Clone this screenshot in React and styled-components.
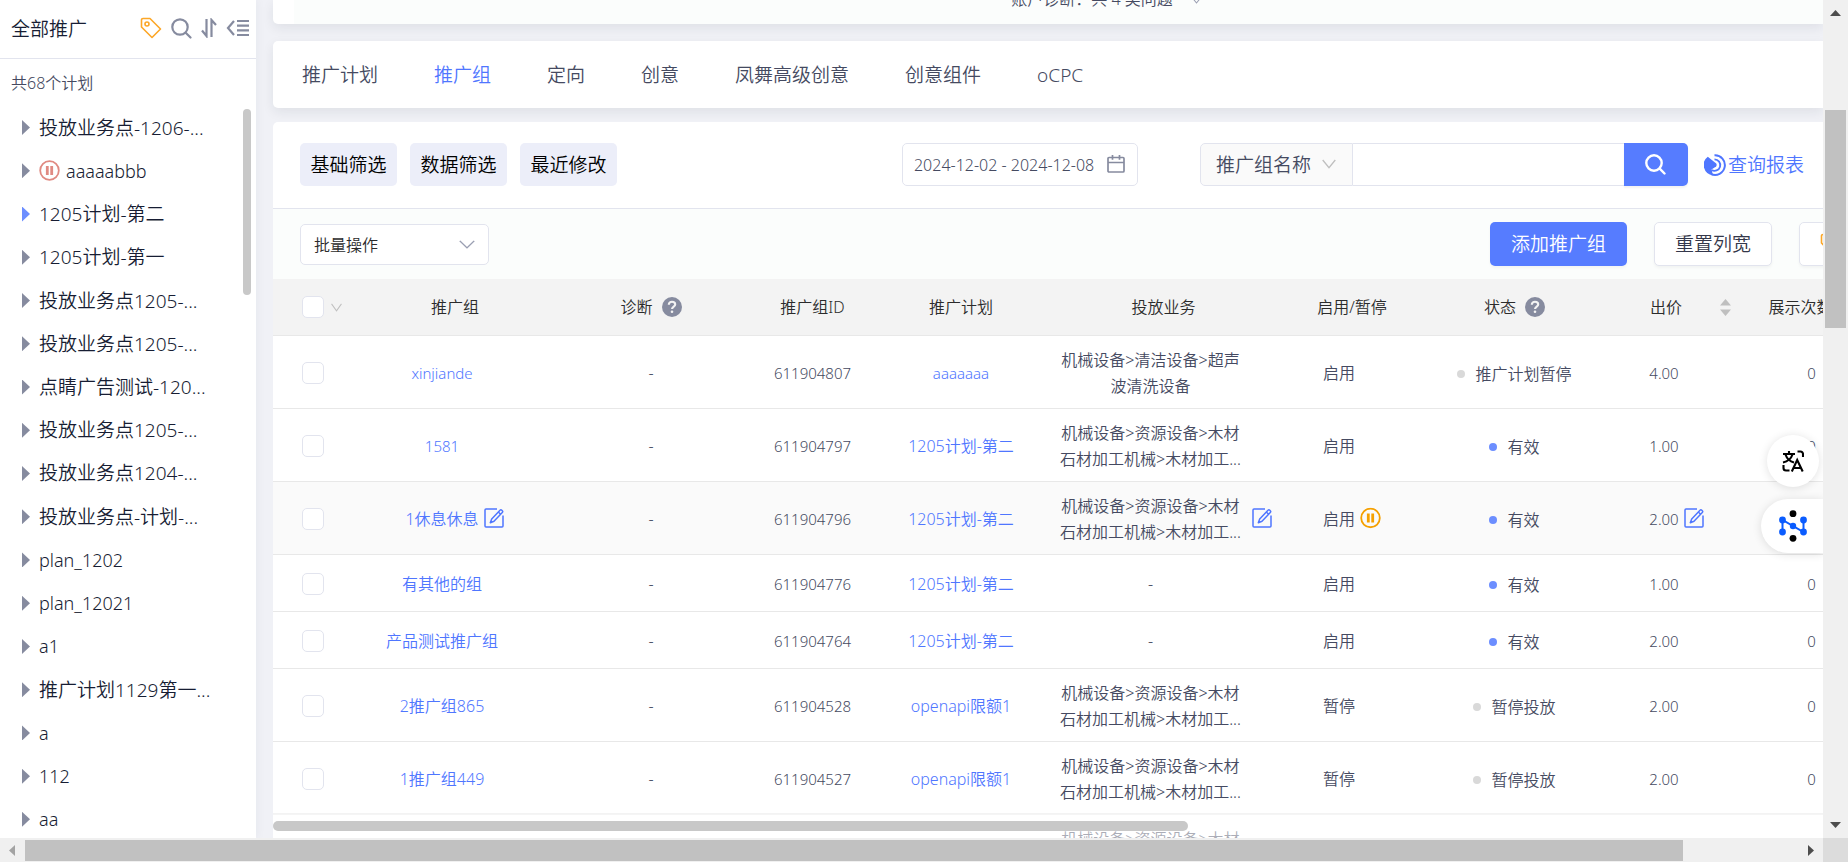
import React from "react";
import styled, { createGlobalStyle, css } from "styled-components";

const c = {
  blue: "#4f76ff",
  fill: "#567cff",
  dot: "#6c8eff",
  text: "#454a61",
  dark: "#171d33",
  icon: "#868b9f",
  line: "#e2e4ee",
  rowLine: "#e8e8e8",
  thumb: "#c8c8c8",
  orange: "#fca728",
};

const GlobalStyle = createGlobalStyle`
  *, *::before, *::after { box-sizing: border-box; }
  body {
    margin: 0;
    overflow: hidden;
    background: #f0f1f6;
    color: ${c.text};
    font: 350 16px/26px "Noto Sans", "Noto Sans CJK SC", sans-serif;
  }
  button, input, select { font: inherit; color: inherit; }
  button { cursor: pointer; }
  svg { display: block; flex: none; }
`;

/* ---------- window frame ---------- */

const Window = styled.div`
  display: grid;
  grid-template-columns: minmax(0, 1fr) 25px;
  grid-template-rows: minmax(0, 1fr) 24px;
  height: 100vh;
`;

const Page = styled.div`
  display: flex;
  gap: 17px;
  min-width: 0;
  overflow: hidden;
`;

const VTrack = styled.div`
  display: flex;
  flex-direction: column;
  align-items: center;
  justify-content: space-between;
  padding: 10px 2px;
  background: #f0f0f0;
`;

const VRail = styled.div`
  flex: 1;
  width: 100%;
  padding: 94px 0 9px;
`;

const VThumb = styled.div`
  height: 31%;
  background: #c1c1c1;
`;

const HTrack = styled.div`
  display: flex;
  align-items: center;
  padding: 2px 9px 1px;
  background: #f0f0f0;
`;

const HRail = styled.div`
  flex: 1;
  height: 100%;
  padding: 0 0 0 10px;
`;

const HThumb = styled.div`
  width: 93%;
  height: 100%;
  background: #c1c1c1;
`;

const Corner = styled.div`
  background: #dcdcdc;
`;

/* ---------- sidebar ---------- */

const Sidebar = styled.aside`
  position: relative;
  display: flex;
  flex: none;
  flex-direction: column;
  width: 256px;
  background: #fff;
  overflow: hidden;
  box-shadow: 0 0 10px rgba(40, 50, 90, 0.06);
`;

const SideHead = styled.header`
  display: flex;
  flex: none;
  align-items: center;
  justify-content: space-between;
  height: 59px;
  padding: 0 6px 2px 11px;
  border-bottom: 1px solid ${c.line};
`;

const SideTitle = styled.h1`
  margin: 0;
  padding-top: 2px;
  color: ${c.dark};
  font-size: 19px;
  font-weight: inherit;
`;

const SideTools = styled.div`
  display: flex;
  align-items: center;
  gap: 9px;
`;

const IconButton = styled.button`
  display: inline-flex;
  align-items: center;
  padding: 0;
  border: 0;
  background: none;
`;

const PlanCount = styled.p`
  flex: none;
  margin: 0;
  padding: 11px 11px 10px;
  line-height: 26px;
`;

const PlanList = styled.ul`
  display: flex;
  flex: 1;
  flex-direction: column;
  min-height: 0;
  margin: 0 0 -3px;
  padding: 0 24px 0 22px;
  list-style: none;
`;

const PlanItem = styled.li`
  display: flex;
  flex: 1;
  align-items: center;
  gap: 9px;
`;

const PlanArrow = styled.button`
  width: 8px;
  height: 15px;
  padding: 0;
  border: 0;
  background: ${(p) => (p.$active ? c.dot : c.icon)};
  clip-path: polygon(0 0, 100% 50%, 0 100%);
`;

const PlanLink = styled.a`
  display: flex;
  align-items: center;
  gap: 6px;
  color: ${c.dark};
  font-size: ${(p) => (p.$latin ? 18 : 19)}px;
  white-space: nowrap;
  text-decoration: none;
`;

const SideThumb = styled.div`
  position: absolute;
  top: 109px;
  right: 5px;
  width: 8px;
  height: 186px;
  border-radius: 4px;
  background: ${c.thumb};
`;

/* ---------- main column ---------- */

const Main = styled.main`
  position: relative;
  display: flex;
  flex: 1;
  flex-direction: column;
  min-width: 0;
`;

const cardShadow = css`
  box-shadow: 0 4px 12px rgba(30, 35, 50, 0.08);
`;

const DiagnosisCard = styled.section`
  flex: none;
  height: 24px;
  padding-left: 21px;
  border-radius: 0 0 0 5px;
  background: #fff;
  ${cardShadow}
`;

const DiagnosisBar = styled.div`
  display: flex;
  align-items: flex-end;
  justify-content: center;
  gap: 18px;
  height: 24px;
  padding: 0 0 12px 96px;
  background: #fbfdfc;
  overflow: hidden;
  > svg { margin-bottom: 8px; }
`;

const TabCard = styled.nav`
  display: flex;
  flex: none;
  align-items: center;
  gap: 56px;
  height: 67px;
  margin-top: 17px;
  padding: 0 29px;
  border-radius: 5px 0 0 5px;
  background: #fff;
  ${cardShadow}
`;

const Tab = styled.a`
  color: ${(p) => (p.$active ? c.blue : c.text)};
  font-size: 19px;
  text-decoration: none;
  white-space: nowrap;
`;

const TableCard = styled.section`
  position: relative;
  flex: 1;
  min-height: 0;
  margin-top: 14px;
  border-radius: 5px 0 0 0;
  background: #fff;
  overflow: hidden;
`;

const FilterBar = styled.div`
  display: flex;
  align-items: center;
  height: 87px;
  padding: 0 19px 2px 27px;
  border-bottom: 1px solid ${c.line};
`;

const FilterGroup = styled.div`
  display: flex;
  flex: 1;
  gap: 13px;
`;

const FilterButton = styled.button`
  width: 97px;
  height: 43px;
  padding: 2px 0 0;
  border: 0;
  border-radius: 5px;
  background: #eceef9;
  color: #000;
  font-size: 19px;
  white-space: nowrap;
`;

const DateField = styled.label`
  display: flex;
  align-items: center;
  width: 236px;
  height: 43px;
  margin-right: 62px;
  padding: 0 12px 0 11px;
  border: 1px solid ${c.line};
  border-radius: 5px;
`;

const DateInput = styled.input`
  flex: 1;
  min-width: 0;
  padding: 2px 0 0;
  border: 0;
  outline: 0;
  background: none;
  font-size: 16px;
`;

const SearchGroup = styled.form`
  display: flex;
  width: 488px;
  height: 43px;
  margin-right: 16px;
`;

const SelectBox = styled.label`
  display: grid;
  align-items: center;
  width: ${(p) => p.$width}px;
  height: ${(p) => p.$height}px;
  border: 1px solid ${c.line};
  border-radius: ${(p) => (p.$joined ? "5px 0 0 5px" : "5px")};
  background: ${(p) => (p.$joined ? "#fafafa" : "#fff")};
  > * { grid-area: 1 / 1; }
  > svg { justify-self: end; margin-right: ${(p) => (p.$joined ? 16 : 13)}px; pointer-events: none; }
`;

const Select = styled.select`
  width: 100%;
  height: 100%;
  padding: 2px ${(p) => (p.$large ? 15 : 13)}px 0;
  border: 0;
  outline: 0;
  appearance: none;
  background: none;
  color: ${(p) => (p.$large ? c.text : "#2b2b2b")};
  font-size: ${(p) => (p.$large ? 19 : 16)}px;
`;

const SearchInput = styled.input`
  flex: 1;
  min-width: 0;
  padding: 0 12px;
  border: 1px solid ${c.line};
  border-width: 1px 0;
  outline: 0;
`;

const SearchButton = styled.button`
  display: flex;
  align-items: center;
  justify-content: center;
  width: 64px;
  padding: 0;
  border: 0;
  border-radius: 0 5px 5px 0;
  background: ${c.fill};
  box-shadow: 0 2px 2px rgba(0, 0, 0, 0.05);
`;

const ReportLink = styled.a`
  display: flex;
  align-items: center;
  gap: 2px;
  padding-top: 2px;
  color: ${c.blue};
  font-size: 19px;
  text-decoration: none;
  white-space: nowrap;
`;

const ActionBar = styled.div`
  display: flex;
  align-items: center;
  justify-content: space-between;
  height: 70px;
  padding-left: 27px;
  background: #fbfdfc;
`;

const ActionGroup = styled.div`
  display: flex;
  gap: 27px;
  margin-right: -94px;
`;

const ActionButton = styled.button`
  display: flex;
  align-items: center;
  min-width: 118px;
  height: 44px;
  padding: 0 ${(p) => (p.$primary ? 21 : 20)}px;
  border: ${(p) => (p.$primary ? "0" : `1px solid ${c.line}`)};
  border-radius: 5px;
  background: ${(p) => (p.$primary ? c.fill : "#fff")};
  color: ${(p) => (p.$primary ? "#fff" : "#34374a")};
  font-size: 19px;
  white-space: nowrap;
  box-shadow: 0 2px 3px rgba(0, 0, 0, 0.04);
`;

/* ---------- table ---------- */

const Table = styled.table`
  width: 100%;
  min-width: 1608px;
  table-layout: fixed;
  border-collapse: separate;
  border-spacing: 0;
`;

const Th = styled.th`
  height: 57px;
  padding: 0;
  border-bottom: 1px solid ${c.rowLine};
  background: #f3f3f3;
  color: #2b2b2b;
  font-weight: inherit;
  text-align: center;
  white-space: nowrap;
`;

const Td = styled.td`
  height: ${(p) => (p.$tall ? 73 : 57)}px;
  padding: 1px ${(p) => (p.$editable ? 26 : 0)}px 0 0;
  border-bottom: 1px solid ${c.rowLine};
  font-size: ${(p) => (p.$number ? 15 : 16)}px;
  text-align: center;
  white-space: nowrap;
`;

const Tr = styled.tr`
  background: ${(p) => (p.$hover ? "#fafafa" : "transparent")};
`;

const HeadContent = styled.div`
  display: flex;
  align-items: center;
  justify-content: center;
  gap: 9px;
`;

const SortHead = styled.div`
  display: flex;
  align-items: center;
  padding-right: 11px;
  > span { flex: 1; }
`;

const CheckCell = styled.div`
  display: flex;
  align-items: center;
  gap: 7px;
  padding-left: 29px;
`;

const Check = styled.input`
  width: 22px;
  height: 22px;
  margin: 0;
  border: 1px solid ${c.line};
  border-radius: 5px;
  appearance: none;
  background: #fff;
`;

const CellLink = styled.a`
  color: ${c.blue};
  font-size: ${(p) => (p.$latin ? 15 : 16)}px;
  text-decoration: none;
`;

const Hoverable = styled.div`
  position: relative;
  display: inline-block;
  line-height: 26px;
`;

const HoverAction = styled(IconButton)`
  position: absolute;
  top: 50%;
  left: calc(100% + ${(p) => p.$gap}px);
  transform: translateY(-55%);
`;

const Status = styled.span`
  display: inline-flex;
  align-items: center;
  gap: 10px;
  &::before {
    content: "";
    width: 8px;
    height: 8px;
    border-radius: 50%;
    background: ${(p) => (p.$on ? c.dot : "#d9d9d9")};
  }
`;

const StickyScroll = styled.div`
  position: absolute;
  right: 0;
  bottom: 0;
  left: 0;
  height: 25px;
  padding-top: 7px;
  border-top: 1px solid #f3f3f3;
  background: rgba(255, 255, 255, 0.55);
`;

const StickyThumb = styled.div`
  width: 59%;
  height: 10px;
  border-radius: 5px;
  background: ${c.thumb};
`;

/* ---------- floating tools ---------- */

const FloatTools = styled.div`
  position: absolute;
  top: 435px;
  right: 0;
  display: flex;
  flex-direction: column;
  align-items: flex-end;
  gap: 12px;
`;

const FloatButton = styled.button`
  display: flex;
  align-items: center;
  justify-content: center;
  width: ${(p) => (p.$docked ? 62 : 52)}px;
  height: ${(p) => (p.$docked ? 54 : 52)}px;
  margin-right: ${(p) => (p.$docked ? 0 : 4)}px;
  padding: 0 0 0 ${(p) => (p.$docked ? 2 : 0)}px;
  border: 0;
  border-radius: ${(p) => (p.$docked ? "27px 0 0 27px" : "50%")};
  background: #fff;
  box-shadow: 0 1px 10px rgba(0, 0, 0, 0.12);
`;

/* ---------- icons ---------- */

const TagIcon = () => (
  <svg width="22" height="22" viewBox="0 0 22 22" fill="none" stroke={c.orange} strokeWidth="1.6" strokeLinejoin="round">
    <path d="M1.500 3a1.500 1.500 0 0 1 1.500-1.500H10L20.500 12 12 20.500 1.500 10Z" />
    <circle cx="7" cy="7" r="2" />
  </svg>
);

const SearchIcon = ({ color = c.icon, size = 21, weight = 2.2 }) => (
  <svg width={size} height={size} viewBox="0 0 21 21" fill="none" stroke={color} strokeWidth={weight} strokeLinecap="round">
    <circle cx="9" cy="9" r="7.700" />
    <path d="M14.700 14.700 19.500 19.500" />
  </svg>
);

const SortIcon = () => (
  <svg width="16" height="20" viewBox="0 0 16 20" fill="none" stroke={c.icon} strokeWidth="2.200">
    <path d="M5.500 1v17L1 12.500M10.500 19V2l4.500 5" />
  </svg>
);

const CollapseIcon = () => (
  <svg width="24" height="18" viewBox="0 0 24 18" fill="none" stroke={c.icon} strokeWidth="2.200">
    <path d="M8 2 2 9l6 7" />
    <path d="M11 2h12M11 6.700h12M11 11.300h12M11 16h12" />
  </svg>
);

const PauseIcon = ({ color }) => (
  <svg width="21" height="21" viewBox="0 0 21 21" fill="none" stroke={color}>
    <circle cx="10.500" cy="10.500" r="9.300" strokeWidth="1.800" />
    <path d="M8.300 6v9M12.700 6v9" strokeWidth="2.800" />
  </svg>
);

const EditIcon = () => (
  <svg width="20" height="20" viewBox="0 0 20 20" fill="none" stroke={c.blue} strokeWidth="1.500" strokeLinejoin="round">
    <path d="M13 1H2a1 1 0 0 0-1 1v16a1 1 0 0 0 1 1h16a1 1 0 0 0 1-1V7.500" />
    <path d="M6.300 14.700 7.700 11 16 2.200a1.300 1.300 0 0 1 1.800 0l.5.500a1.300 1.300 0 0 1 0 1.800L10 13.200Z" />
    <path d="m14.300 4 2.300 2.200" />
  </svg>
);

const HelpIcon = () => (
  <svg width="20" height="20" viewBox="0 0 20 20" fill="none">
    <circle cx="10" cy="10" r="10" fill={c.icon} />
    <path d="M6.800 7.800C6.800 5.700 8.200 4.800 10 4.800s3.200 1 3.200 2.700c0 2-3.200 2.300-3.200 4.600" stroke="#f3f3f3" strokeWidth="2.100" />
    <circle cx="10" cy="14.800" r="1.300" fill="#f3f3f3" />
  </svg>
);

const Chevron = ({ width = 14, height = 10, color = "#9a9fb2" }) => (
  <svg width={width} height={height} viewBox="0 0 14 10" fill="none" stroke={color} strokeWidth="1.300" preserveAspectRatio="none">
    <path d="M.7 1 7 8.700 13.300 1" />
  </svg>
);

const SorterIcon = () => (
  <svg width="11" height="17" viewBox="0 0 11 17" fill="#bfbfbf">
    <path d="M5.500 0 11 6.500H0ZM5.500 17 0 10.500h11Z" />
  </svg>
);

const CalendarIcon = () => (
  <svg width="18" height="18" viewBox="0 0 18 18" fill="none" stroke={c.icon} strokeWidth="1.700">
    <rect x="1" y="2.500" width="16" height="14.500" rx="1" />
    <path d="M1 7.500h16M5.500 0v4.800M12.500 0v4.800" />
  </svg>
);

const ReportIcon = () => (
  <svg width="22" height="22" viewBox="0 0 22 22" fill="none">
    <path d="M3.800 2.800 11 8.500a2.600 2.600 0 0 1-.5 5L7.500 15.500l1.500 5.800A10.300 10.300 0 0 1 3.800 2.800Z" fill={c.blue} />
    <path d="M10.500 1.300A9.800 9.800 0 1 1 7 20" stroke={c.blue} strokeWidth="2" />
    <path d="M10.500 5.400a5.700 5.700 0 1 1-3 10.500" stroke={c.blue} strokeWidth="1.800" />
  </svg>
);

const TranslateIcon = () => (
  <svg width="22" height="22" viewBox="0 0 22 22" fill="none" stroke="#000" strokeWidth="2.100">
    <path d="M1 4h12M7 1v3M3.500 4.500C5 9 8 11.500 12 12.500M10.500 4.500C9 9 6 11.500 1 12.500" />
    <path d="M15.500 1.500h3A2.500 2.500 0 0 1 21 4v3M1.500 15v3A2.500 2.500 0 0 0 4 20.500h3.500" />
    <path d="m9.800 21.500 5.400-11.500 5.500 11.500M11.500 18h7.500" />
  </svg>
);

const NodesIcon = () => (
  <svg width="30" height="32" viewBox="0 0 30 32">
    <path d="M4.500 22V10l21 12V10" fill="none" stroke="#0a5cff" strokeWidth="2" />
    <g fill="#0a5cff">
      <circle cx="4.500" cy="10" r="3.400" />
      <circle cx="4.500" cy="22" r="3.400" />
      <circle cx="25.500" cy="10" r="3.400" />
      <circle cx="25.500" cy="22" r="3.400" />
      <circle cx="15" cy="16" r="3.200" />
    </g>
    <circle cx="15" cy="3.700" r="3.400" />
    <circle cx="15" cy="28.300" r="3.400" />
  </svg>
);

const ScrollArrow = ({ dir, color = "#4d4d4d" }) => {
  const shapes = {
    up: [11, 6, "M0 6 5.500 0 11 6Z"],
    down: [11, 6, "M0 0h11L5.500 6Z"],
    left: [6, 11, "M6 0v11L0 5.500Z"],
    right: [6, 11, "M0 0 6 5.500 0 11Z"],
  };
  const [w, h, d] = shapes[dir];
  return (
    <svg width={w} height={h} viewBox={`0 0 ${w} ${h}`} fill={color}>
      <path d={d} />
    </svg>
  );
};

/* ---------- data ---------- */

const plans = [
  { name: "投放业务点-1206-..." },
  { name: "aaaaabbb", paused: true, latin: true },
  { name: "1205计划-第二", active: true },
  { name: "1205计划-第一" },
  { name: "投放业务点1205-..." },
  { name: "投放业务点1205-..." },
  { name: "点睛广告测试-120..." },
  { name: "投放业务点1205-..." },
  { name: "投放业务点1204-..." },
  { name: "投放业务点-计划-..." },
  { name: "plan_1202", latin: true },
  { name: "plan_12021", latin: true },
  { name: "a1", latin: true },
  { name: "推广计划1129第一..." },
  { name: "a", latin: true },
  { name: "112", latin: true },
  { name: "aa", latin: true },
];

const tabs = ["推广计划", "推广组", "定向", "创意", "凤舞高级创意", "创意组件", "oCPC"];

const wood = ["机械设备>资源设备>木材", "石材加工机械>木材加工..."];
const cleaning = ["机械设备>清洁设备>超声", "波清洗设备"];

const groups = [
  { name: "xinjiande", latin: true, id: "611904807", plan: "aaaaaaa", planLatin: true, biz: cleaning, state: "启用", status: "推广计划暂停", bid: "4.00" },
  { name: "1581", latin: true, id: "611904797", plan: "1205计划-第二", biz: wood, state: "启用", status: "有效", on: true, bid: "1.00" },
  { name: "1休息休息", id: "611904796", plan: "1205计划-第二", biz: wood, state: "启用", status: "有效", on: true, bid: "2.00", hover: true },
  { name: "有其他的组", id: "611904776", plan: "1205计划-第二", state: "启用", status: "有效", on: true, bid: "1.00" },
  { name: "产品测试推广组", id: "611904764", plan: "1205计划-第二", state: "启用", status: "有效", on: true, bid: "2.00" },
  { name: "2推广组865", id: "611904528", plan: "openapi限额1", biz: wood, state: "暂停", status: "暂停投放", bid: "2.00" },
  { name: "1推广组449", id: "611904527", plan: "openapi限额1", biz: wood, state: "暂停", status: "暂停投放", bid: "2.00" },
  { name: "1推广组448", id: "611904526", plan: "openapi限额1", biz: wood, state: "暂停", status: "暂停投放", bid: "2.00" },
];

const columnWidths = [78, 208, 184, 139, 158, 247, 130, 195, 130, 139];

/* ---------- parts ---------- */

const EditAction = ({ label, gap = 5 }) => (
  <HoverAction type="button" aria-label={label} $gap={gap}>
    <EditIcon />
  </HoverAction>
);

function GroupRow({ group }) {
  const tall = Boolean(group.biz);
  return (
    <Tr $hover={group.hover}>
      <Td $tall={tall}>
        <CheckCell>
          <Check type="checkbox" aria-label={group.name} />
        </CheckCell>
      </Td>
      <Td $editable>
        <Hoverable>
          <CellLink href="#group" $latin={group.latin}>{group.name}</CellLink>
          {group.hover && <EditAction label="编辑推广组" />}
        </Hoverable>
      </Td>
      <Td>-</Td>
      <Td $number>{group.id}</Td>
      <Td>
        <CellLink href="#plan" $latin={group.planLatin}>{group.plan}</CellLink>
      </Td>
      <Td $editable>
        <Hoverable>
          {tall ? (
            <>
              {group.biz[0]}
              <br />
              {group.biz[1]}
            </>
          ) : (
            "-"
          )}
          {group.hover && <EditAction label="编辑投放业务" gap={11} />}
        </Hoverable>
      </Td>
      <Td $editable>
        <Hoverable>
          {group.state}
          {group.hover && (
            <HoverAction type="button" aria-label="暂停" $gap={5}>
              <PauseIcon color="#f5a000" />
            </HoverAction>
          )}
        </Hoverable>
      </Td>
      <Td>
        <Status $on={group.on}>{group.status}</Status>
      </Td>
      <Td $editable $number>
        <Hoverable>
          {group.bid}
          {group.hover && <EditAction label="编辑出价" />}
        </Hoverable>
      </Td>
      <Td $number>0</Td>
    </Tr>
  );
}

function PlanTree() {
  return (
    <Sidebar>
      <SideHead>
        <SideTitle>全部推广</SideTitle>
        <SideTools>
          <IconButton type="button" aria-label="标签"><TagIcon /></IconButton>
          <IconButton type="button" aria-label="搜索"><SearchIcon /></IconButton>
          <IconButton type="button" aria-label="排序"><SortIcon /></IconButton>
          <IconButton type="button" aria-label="收起"><CollapseIcon /></IconButton>
        </SideTools>
      </SideHead>
      <PlanCount>共68个计划</PlanCount>
      <PlanList>
        {plans.map((plan, i) => (
          <PlanItem key={i}>
            <PlanArrow type="button" aria-label="展开" $active={plan.active} />
            <PlanLink href="#plan" $latin={plan.latin}>
              {plan.paused && <PauseIcon color="#e08a82" />}
              {plan.name}
            </PlanLink>
          </PlanItem>
        ))}
      </PlanList>
      <SideThumb />
    </Sidebar>
  );
}

export default function App() {
  return (
    <>
      <GlobalStyle />
      <Window>
        <Page>
          <PlanTree />
          <Main>
            <DiagnosisCard>
              <DiagnosisBar>
                <span>账户诊断：共 4 类问题</span>
                <Chevron width={11} height={8} />
              </DiagnosisBar>
            </DiagnosisCard>

            <TabCard>
              {tabs.map((tab) => (
                <Tab key={tab} href="#tab" $active={tab === "推广组"}>{tab}</Tab>
              ))}
            </TabCard>

            <TableCard>
              <FilterBar>
                <FilterGroup>
                  <FilterButton type="button">基础筛选</FilterButton>
                  <FilterButton type="button">数据筛选</FilterButton>
                  <FilterButton type="button">最近修改</FilterButton>
                </FilterGroup>
                <DateField>
                  <DateInput aria-label="日期范围" defaultValue="2024-12-02 - 2024-12-08" />
                  <CalendarIcon />
                </DateField>
                <SearchGroup>
                  <SelectBox $joined $width={153} $height={43}>
                    <Select $large aria-label="搜索类型">
                      <option>推广组名称</option>
                    </Select>
                    <Chevron color="#bfbfbf" />
                  </SelectBox>
                  <SearchInput aria-label="搜索内容" />
                  <SearchButton type="button" aria-label="搜索">
                    <SearchIcon color="#fff" weight={2.4} />
                  </SearchButton>
                </SearchGroup>
                <ReportLink href="#report">
                  <ReportIcon />
                  查询报表
                </ReportLink>
              </FilterBar>

              <ActionBar>
                <SelectBox $width={189} $height={41}>
                  <Select aria-label="批量操作">
                    <option>批量操作</option>
                  </Select>
                  <Chevron width={16} height={9} />
                </SelectBox>
                <ActionGroup>
                  <ActionButton type="button" $primary>添加推广组</ActionButton>
                  <ActionButton type="button">重置列宽</ActionButton>
                  <ActionButton type="button" aria-label="标签">
                    <TagIcon />
                  </ActionButton>
                </ActionGroup>
              </ActionBar>

              <Table>
                <colgroup>
                  {columnWidths.map((width, i) => (
                    <col key={i} width={width} />
                  ))}
                </colgroup>
                <thead>
                  <tr>
                    <Th>
                      <CheckCell>
                        <Check type="checkbox" aria-label="全选" />
                        <Chevron width={11} height={9} color="#bfbfbf" />
                      </CheckCell>
                    </Th>
                    <Th>推广组</Th>
                    <Th><HeadContent>诊断<HelpIcon /></HeadContent></Th>
                    <Th>推广组ID</Th>
                    <Th>推广计划</Th>
                    <Th>投放业务</Th>
                    <Th>启用/暂停</Th>
                    <Th><HeadContent>状态<HelpIcon /></HeadContent></Th>
                    <Th><SortHead><span>出价</span><SorterIcon /></SortHead></Th>
                    <Th><SortHead><span>展示次数</span><SorterIcon /></SortHead></Th>
                  </tr>
                </thead>
                <tbody>
                  {groups.map((group) => (
                    <GroupRow key={group.id} group={group} />
                  ))}
                </tbody>
              </Table>

              <StickyScroll>
                <StickyThumb />
              </StickyScroll>
            </TableCard>

            <FloatTools>
              <FloatButton type="button" aria-label="翻译"><TranslateIcon /></FloatButton>
              <FloatButton type="button" aria-label="助手" $docked><NodesIcon /></FloatButton>
            </FloatTools>
          </Main>
        </Page>
        <VTrack>
          <ScrollArrow dir="up" />
          <VRail><VThumb /></VRail>
          <ScrollArrow dir="down" />
        </VTrack>
        <HTrack>
          <ScrollArrow dir="left" color="#a3a3a3" />
          <HRail><HThumb /></HRail>
          <ScrollArrow dir="right" />
        </HTrack>
        <Corner />
      </Window>
    </>
  );
}
